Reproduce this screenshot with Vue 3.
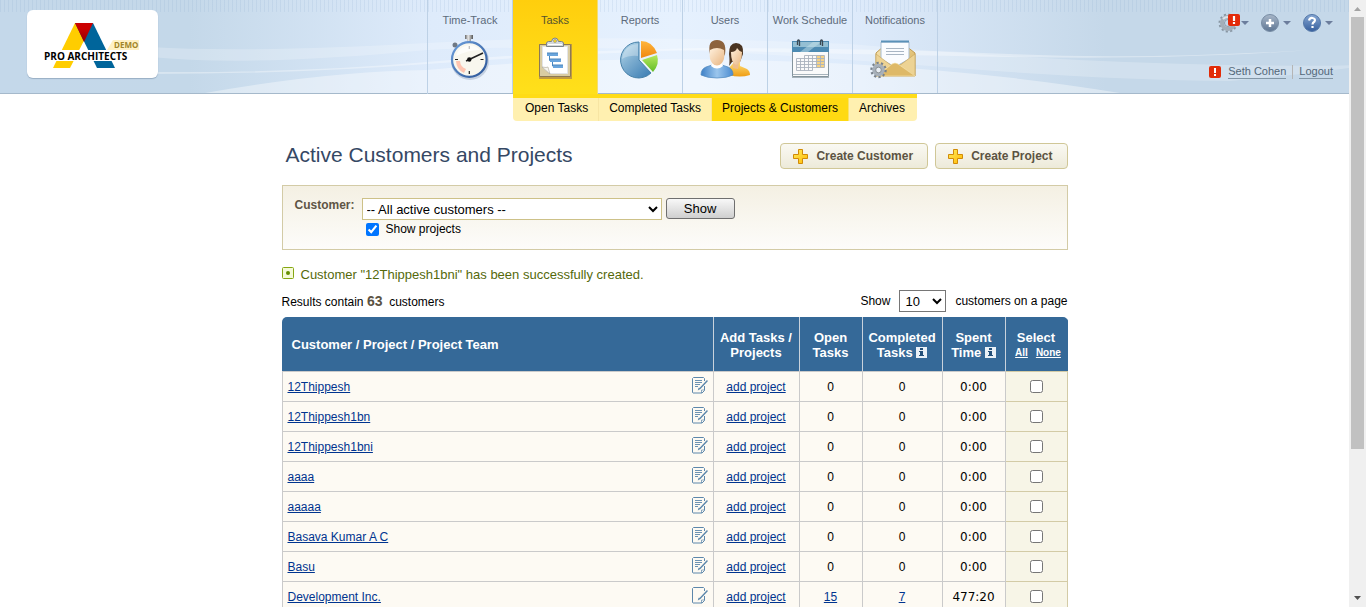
<script setup>
import { ref } from 'vue'

const navItems = [
  { label: 'Time-Track', icon: 'watch' },
  { label: 'Tasks', icon: 'tasks', active: true },
  { label: 'Reports', icon: 'pie' },
  { label: 'Users', icon: 'users' },
  { label: 'Work Schedule', icon: 'calendar' },
  { label: 'Notifications', icon: 'mail' },
]

const subItems = [
  { label: 'Open Tasks' },
  { label: 'Completed Tasks' },
  { label: 'Projects & Customers', active: true },
  { label: 'Archives' },
]

const customers = ref([
  { name: '12Thippesh', note: true, open: 0, done: 0, spent: '0:00', picked: false },
  { name: '12Thippesh1bn', note: true, open: 0, done: 0, spent: '0:00', picked: false },
  { name: '12Thippesh1bni', note: true, open: 0, done: 0, spent: '0:00', picked: false },
  { name: 'aaaa', note: true, open: 0, done: 0, spent: '0:00', picked: false },
  { name: 'aaaaa', note: true, open: 0, done: 0, spent: '0:00', picked: false },
  { name: 'Basava Kumar A C', note: true, open: 0, done: 0, spent: '0:00', picked: false },
  { name: 'Basu', note: true, open: 0, done: 0, spent: '0:00', picked: false },
  { name: 'Development Inc.', note: false, open: 15, done: 7, spent: '477:20', picked: false },
])

const showProjects = ref(true)
const pageSize = ref('10')

function pickAll(value) {
  customers.value.forEach((c) => { c.picked = value })
}
</script>

<template>
  <div class="screen">
    <div class="page">
      <header class="header">
        <svg class="waves" viewBox="0 0 1349 93" preserveAspectRatio="none" aria-hidden="true">
          <path d="M150 47Q250 53 427 43T850 44Q1050 62 1230 65T1349 60V68Q1290 76 1230 81Q1100 80 930 66T640 49Q520 46 427 50Q250 67 150 57Z" fill="#fff" opacity=".22" />
          <path d="M150 72Q300 73 427 62T700 48Q880 48 1010 54T1310 50Q1180 60 1010 57T700 50Q560 54 427 64T150 74Z" fill="#fff" opacity=".35" />
          <path d="M205 93Q330 71 427 70Q620 52 850 64Q1000 73 1120 93Z" fill="#fff" opacity=".38" />
        </svg>
        <div class="stripes"></div>

        <div class="brand">
          <a class="logo" href="#" aria-label="Pro Architects demo">
            <svg width="131" height="68" viewBox="27 10 131 68" aria-hidden="true">
              <defs>
                <linearGradient id="red" x1="0" y1="0" x2="0" y2="1">
                  <stop offset=".3" stop-color="#cb0000" />
                  <stop offset="1" stop-color="#8e0008" />
                </linearGradient>
              </defs>
              <path d="M75 23h18L70 68H53z" fill="#ffcd00" />
              <path d="M93 23l22 45H97L75 23z" fill="#00659b" />
              <path d="M75 23h18L84 42z" fill="url(#red)" />
              <path d="M46 50h80v11H46z" fill="#fff" />
              <path d="M113 40h26v10h-32z" fill="#fff1c4" />
              <text x="114" y="48" class="demo-text">DEMO</text>
              <text x="44" y="60" class="logo-text">PRO ARCHITECTS</text>
            </svg>
          </a>
        </div>

        <nav class="nav">
          <a v-for="item in navItems" :key="item.label" href="#" class="nav-item" :class="{ active: item.active }">
            <span class="nav-label">{{ item.label }}</span>
            <svg v-if="item.icon === 'watch'" width="50" height="50" viewBox="0 0 50 50" aria-hidden="true">
              <defs>
                <linearGradient id="silver" x1="0" x2="1"><stop offset="0" stop-color="#666" /><stop offset=".4" stop-color="#e8e8e8" /><stop offset="1" stop-color="#555" /></linearGradient>
                <linearGradient id="rim" x1="0" x2="1" y2="1"><stop offset="0" stop-color="#6c9edb" /><stop offset="1" stop-color="#2b5597" /></linearGradient>
              </defs>
              <circle cx="25" cy="28" r="19" fill="#9fb0c5" opacity=".5" />
              <path d="M20 2h8v4h-2v3h-4V6h-2z" fill="url(#silver)" />
              <circle cx="10" cy="12" r="2.500" fill="#707984" /><path d="M11 13l4 4" stroke="#777" stroke-width="2" />
              <circle cx="24.300" cy="26.500" r="17.300" fill="#f8f7ee" stroke="url(#rim)" stroke-width="2.200" />
              <path d="M11 28a14 14 0 0 0 8 12l2-4a9 9 0 0 1-6-8z" fill="#ffb6a0" opacity=".8" />
              <path d="M24.300 13v3M24.300 38v3M10 26.500h3M35.500 26.500h3" stroke="#222" stroke-width="1.200" />
              <path d="M21 28l17-8" stroke="#222" stroke-width="1.500" /><circle cx="24.300" cy="26.500" r="2.200" fill="#111" />
              <path d="M11 23A14 14 0 0 1 35 17Q23 17 11 23z" fill="#fff" opacity=".7" />
            </svg>
            <svg v-else-if="item.icon === 'tasks'" width="50" height="50" viewBox="0 0 50 50" aria-hidden="true">
              <path d="M9 11h33v35H9z" fill="#c09b40" />
              <path d="M9.500 11.500h31v32h-31z" fill="#d9cca2" stroke="#8d7954" />
              <path d="M12.500 13.500h25v27H20l-7.500-6z" fill="#fff" stroke="#e3e4e6" />
              <path d="M12 34q5 1 6 0 1 4 2 7z" fill="#f6f4ee" stroke="#aaa494" stroke-width=".6" />
              <path d="M16.500 13.500V10q0-1 2-1.500h3Q22 5 25 5t3.500 3.500h3q2 .500 2 1.500v3.500z" fill="#d4d9dc" stroke="#7c8388" /><circle cx="25" cy="8" r="1.500" fill="#ffdc16" stroke="#888" stroke-width=".6" />
              <path d="M18 11.500h14" stroke="#fff" />
              <path d="M19.500 22v5.500h3V33h3" fill="none" stroke="#4886bf" />
              <path d="M17 20h11v3H17zM20 26h11v3H20zM23 32h10v3H23z" fill="#6aa5dc" />
              <path d="M17 20h11M20 26h11M23 32h10" stroke="#4d87bd" />
            </svg>
            <svg v-else-if="item.icon === 'pie'" width="50" height="50" viewBox="0 0 50 50" aria-hidden="true">
              <defs>
                <linearGradient id="blue" x1="0" y1="0" x2=".8" y2="1"><stop offset="0" stop-color="#bfe0f0" /><stop offset=".45" stop-color="#82b1d2" /><stop offset="1" stop-color="#4383b7" /></linearGradient>
                <linearGradient id="orange" x1="0" x2="0" y2="1"><stop offset="0" stop-color="#ffb63c" /><stop offset="1" stop-color="#ef8710" /></linearGradient>
                <linearGradient id="green" x1="0" x2="0" y2="1"><stop offset="0" stop-color="#b6e85c" /><stop offset="1" stop-color="#63bd28" /></linearGradient>
              </defs>
              <path d="M24 27V9a18 18 0 1 0 12 31z" fill="url(#blue)" stroke="#4781a9" />
              <path d="M7 26Q9 12 23 11v12Q14 22 7 26z" fill="#fff" opacity=".3" />
              <path d="M26 25V8q11 0 16 12z" fill="url(#orange)" />
              <path d="M27 27l15-5q3 9-4 17z" fill="url(#green)" />
            </svg>
            <svg v-else-if="item.icon === 'users'" width="50" height="50" viewBox="0 0 50 50" aria-hidden="true">
              <defs>
                <linearGradient id="shirt" x1="0" x2="1"><stop offset="0" stop-color="#3e80c6" /><stop offset=".5" stop-color="#9bc6ed" /><stop offset="1" stop-color="#4b8bd0" /></linearGradient>
                <linearGradient id="skin" x1="0" x2="1" y2="1"><stop offset="0" stop-color="#fff0dc" /><stop offset="1" stop-color="#e8b581" /></linearGradient>
                <linearGradient id="gold" x1="0" x2="0" y2="1"><stop offset="0" stop-color="#ffe079" /><stop offset="1" stop-color="#ef9d15" /></linearGradient>
              </defs>
              <path d="M29 33q1-4 0-12 0-11 7-11 8 0 7 11l-3 8h-8z" fill="#4b3421" />
              <path d="M34 29h6v4l7 3q3 2 3 6-10 3-21 0V35z" fill="url(#gold)" />
              <path d="M33 29h6l-1 7-5-1z" fill="#eebd8c" />
              <path d="M31 19q5 0 6-4 2 3 5 4 0 12-6 13-5-2-5-13" fill="url(#skin)" />
              <path d="M10 21Q7 7 17 7t8 14l-3 6H12z" fill="#8d633d" />
              <path d="M12 29h10v5H12z" fill="#eec294" />
              <path d="M10 17q7-4 14 0 2 14-7 15-9-1-7-15" fill="url(#skin)" />
              <path d="M1 42q0-6 5-8l6-2q5 5 10 0l6 2q5 2 5 8-6 3-16 3T1 42" fill="url(#shirt)" stroke="#4c87bd" stroke-width=".7" />
              <path d="M12 30q5 5 10 0l1 3q-6 5-12 0z" fill="#fff" />
            </svg>
            <svg v-else-if="item.icon === 'calendar'" width="50" height="50" viewBox="0 0 50 50" aria-hidden="true">
              <path d="M7.500 9.500h36v34h-36z" fill="#fafafa" stroke="#84949d" />
              <path d="M7 8h37v11H7z" fill="#4d8bb2" /><path d="M8 9h35v5H8z" fill="#94bfd3" /><path d="M15 19L28 9h8L23 19z" fill="#c4e2e9" opacity=".5" />
              <path d="M12.500 12V8q1-2 2 0v5M35.500 12V8q1-2 2 0v5" fill="none" stroke="#3c4a54" stroke-width="1.300" />
              <path d="M32 22h7v13h-7z" fill="#f6d284" />
              <path d="M19.500 22.500h20v12h-4M11.500 25.500h28M11.500 28.500h28M11.500 31.500h28M11.500 34.500h24M11.500 37.500h16M11.500 25.500v12M15.500 25.500v12M19.500 22.500v15M23.500 22.500v15M27.500 22.500v15M31.500 22.500v12M35.500 22.500v12" fill="none" stroke="#aab2bd" stroke-width=".9" />
              <path d="M8 41.500h35M7 44.500h37" stroke="#a7b3bb" />
            </svg>
            <svg v-else width="50" height="50" viewBox="0 0 50 50" aria-hidden="true">
              <defs>
                <linearGradient id="env" x1="0" x2="1" y2="1"><stop offset="0" stop-color="#f8e6b3" /><stop offset="1" stop-color="#d3a94f" /></linearGradient>
              </defs>
              <path d="M6 20l8-7h22l9 7v23H6z" fill="url(#env)" stroke="#c09a4e" />
              <path d="M11 9h28v17L25 34 11 26z" fill="#fafcff" stroke="#a8bcd0" />
              <path d="M11 8.500h28" stroke="#5a91b8" stroke-width="2" /><path d="M16 15.500h18M16 18.500h18M16 21.500h18" stroke="#a9b6c4" />
              <path d="M6 21l16 12L6 43zM45 21L29 33l16 10z" fill="#edd394" stroke="#c8a55b" stroke-width=".6" />
              <path d="M7 43l15-12q3-2 6 0l17 12z" fill="#deb968" stroke="#f8e7b5" stroke-width=".6" />
              <circle cx="8.500" cy="37" r="7" fill="none" stroke="#77818c" stroke-width="2.500" stroke-dasharray="2.200 2.198" />
              <circle cx="8.500" cy="37" r="4.500" fill="none" stroke="#a7b0ba" stroke-width="3.500" /><circle cx="8.500" cy="37" r="2.800" fill="#e9eef4" stroke="#747e88" stroke-width=".8" />
            </svg>
          </a>
        </nav>

        <div class="account">
          <div class="tools">
            <button type="button" class="tool" aria-label="Settings">
              <svg width="31" height="22" viewBox="0 0 31 22" aria-hidden="true">
                <circle cx="10" cy="12" r="8.500" fill="none" stroke="#8896a3" stroke-width="2" stroke-dasharray="2.200 2.251" />
                <circle cx="10" cy="12" r="6" fill="none" stroke="#a3aeb9" stroke-width="4" /><path d="M5 8a6 6 0 0 1 9 0" fill="none" stroke="#dbe1e7" stroke-width="2" /><circle cx="10" cy="12" r="3.500" fill="#c5d8ea" stroke="#7d8b99" stroke-width=".8" />
                <rect x="10" y="3" width="12" height="12" rx="2" fill="#e32b0b" /><path d="M16 5v5M16 11v2" stroke="#fff" stroke-width="2.200" />
                <path d="M23 10h8l-4 4z" fill="#6c7d9c" />
              </svg>
            </button>
            <button type="button" class="tool" aria-label="Add">
              <svg width="31" height="22" viewBox="0 0 31 22" aria-hidden="true">
                <defs><linearGradient id="ball" x1="0" x2="0" y2="1"><stop offset="0" stop-color="#a8b7c9" /><stop offset="1" stop-color="#5e7693" /></linearGradient></defs>
                <circle cx="10" cy="12" r="8.500" fill="url(#ball)" stroke="#788da5" /><path d="M10 8v8M6 12h8" stroke="#fff" stroke-width="2.500" />
                <path d="M23 10h8l-4 4z" fill="#6c7d9c" />
              </svg>
            </button>
            <button type="button" class="tool" aria-label="Help">
              <svg width="31" height="22" viewBox="0 0 31 22" aria-hidden="true">
                <defs><linearGradient id="ball2" x1="0" x2="0" y2="1"><stop offset="0" stop-color="#86a7d3" /><stop offset="1" stop-color="#365f9d" /></linearGradient></defs>
                <circle cx="10" cy="12" r="8.500" fill="url(#ball2)" stroke="#5478a9" />
                <path d="M7 9.500q.500-3 3.500-2.500 3.500.800 2 3.500-2 1.200-2 3M10.500 15v2" fill="none" stroke="#fff" stroke-width="2.200" />
                <path d="M23 10h8l-4 4z" fill="#6c7d9c" />
              </svg>
            </button>
          </div>
          <div class="user">
            <svg width="12" height="12" viewBox="0 0 12 12" aria-hidden="true"><rect width="12" height="12" rx="2" fill="#e22b08" /><path d="M6 2v5M6 8v2" stroke="#fff" stroke-width="2" /></svg>
            <a href="#" class="user-link">Seth Cohen</a>
            <span class="divider"></span>
            <a href="#" class="user-link">Logout</a>
          </div>
        </div>
      </header>

      <nav class="subnav">
        <div class="subnav-bar">
          <a v-for="item in subItems" :key="item.label" href="#" class="sub-item" :class="{ active: item.active }">{{ item.label }}</a>
        </div>
      </nav>

      <main class="content">
        <div class="title-row">
          <h1>Active Customers and Projects</h1>
          <div class="actions">
            <button v-for="label in ['Create Customer', 'Create Project']" :key="label" type="button" class="create">
              <svg width="15" height="15" viewBox="0 0 15 15" aria-hidden="true">
                <defs><linearGradient id="plus" x1="0" x2="1" y2="1"><stop offset="0" stop-color="#ffed61" /><stop offset="1" stop-color="#ffb900" /></linearGradient></defs>
                <path d="M5.500.500h4v5h5v4h-5v5h-4v-5h-5v-4h5z" fill="url(#plus)" stroke="#d18b08" />
              </svg>
              {{ label }}
            </button>
          </div>
        </div>

        <form class="filter" @submit.prevent>
          <label class="filter-label" for="customer">Customer:</label>
          <div class="filter-fields">
            <div class="filter-line">
              <select id="customer" class="customer-select">
                <option>-- All active customers --</option>
              </select>
              <button type="submit" class="show">Show</button>
            </div>
            <label class="check-line"><input v-model="showProjects" type="checkbox" />Show projects</label>
          </div>
        </form>

        <p class="message">
          <svg width="12" height="12" viewBox="0 0 12 12" aria-hidden="true"><rect x=".5" y=".5" width="11" height="11" rx="1" fill="#f5fad9" stroke="#86a612" /><circle cx="6" cy="6" r="2" fill="#648d00" /></svg>
          Customer "12Thippesh1bni" has been successfully created.
        </p>

        <div class="summary">
          <div class="results">Results contain <strong>63</strong>&nbsp; customers</div>
          <div class="paging">
            <label for="size">Show</label>
            <select id="size" v-model="pageSize" class="size-select"><option>10</option><option>20</option><option>50</option></select>
            <span>customers on a page</span>
          </div>
        </div>

        <table class="grid">
          <colgroup>
            <col /><col class="w-add" /><col class="w-open" /><col class="w-done" /><col class="w-spent" /><col class="w-select" />
          </colgroup>
          <thead>
            <tr>
              <th class="first">Customer / Project / Project Team</th>
              <th>Add Tasks /<br />Projects</th>
              <th>Open<br />Tasks</th>
              <th>Completed<br />Tasks <svg class="info" width="11" height="11" viewBox="0 0 11 11" aria-hidden="true"><path d="M0 0h11v11H0z" fill="#eaf1f7" /><path d="M4 1h3v2H4zM3 4h4v4h1v1H3V8h1V5H3z" fill="#234f79" /></svg></th>
              <th>Spent<br />Time <svg class="info" width="11" height="11" viewBox="0 0 11 11" aria-hidden="true"><path d="M0 0h11v11H0z" fill="#eaf1f7" /><path d="M4 1h3v2H4zM3 4h4v4h1v1H3V8h1V5H3z" fill="#234f79" /></svg></th>
              <th>
                Select
                <div class="select-links"><a href="#" @click.prevent="pickAll(true)">All</a><a href="#" @click.prevent="pickAll(false)">None</a></div>
              </th>
            </tr>
          </thead>
          <tbody>
            <tr v-for="c in customers" :key="c.name">
              <td class="name">
                <div class="name-line">
                  <a href="#">{{ c.name }}</a>
                  <svg width="16" height="17" viewBox="0 0 16 17" fill="none" stroke="#5c87ab" aria-hidden="true">
                    <path d="M12.500 4V1.500l-1-1h-10l-1 1v14l.500.500h9l2.500-2.500V9" />
                    <path d="M9.500 16v-3h3" stroke-width=".7" />
                    <path v-if="c.note" d="M3 3.500h7M3 5.500h7M3 7.500h5M3 9.500h3" stroke-width=".9" />
                    <path d="M15.500 3.500L8 11.500l-1 .500.300-1" stroke-width="1.500" />
                  </svg>
                </div>
              </td>
              <td><a href="#">add project</a></td>
              <td><a v-if="c.open" href="#">{{ c.open }}</a><template v-else>0</template></td>
              <td><a v-if="c.done" href="#">{{ c.done }}</a><template v-else>0</template></td>
              <td class="spent">{{ c.spent }}</td>
              <td class="pick"><input v-model="c.picked" type="checkbox" :aria-label="'Select ' + c.name" /></td>
            </tr>
          </tbody>
        </table>
      </main>
    </div>

    <div class="scrollbar" aria-hidden="true">
      <svg width="17" height="17" viewBox="0 0 17 17"><path d="M5 11l3.500-4 3.500 4z" fill="#a3a3a3" /></svg>
      <div class="track"><div class="thumb"></div></div>
      <svg width="17" height="17" viewBox="0 0 17 17"><path d="M5 6l3.500 4L12 6z" fill="#505050" /></svg>
    </div>
  </div>
</template>

<style>
body { background: #fff; }
</style>

<style scoped>
.screen {
  display: flex;
  height: 100vh;
  overflow: hidden;
  font: 12px/15px "Liberation Sans", Arial, sans-serif;
  color: #000;
  --nav-left: 427px;
  --nav-cell: 85px;
}
.page { flex: 1; min-width: 0; overflow: hidden; }
.header {
  position: relative;
  display: flex;
  height: 94px;
  box-sizing: border-box;
  background: linear-gradient(90deg, #c4d8ea 0, #c4d8e9 14%, #deebfb 32%, #e6f1fe 50%, #deebfb 63%, #c5d8e9 82%, #c5d8e9 100%);
  box-shadow: inset 0 -1px #a5b9cb;
}
.waves { position: absolute; left: 0; top: 0; width: 100%; height: 93px; }
.stripes {
  position: absolute; left: 0; right: 0; top: 0; height: 12px;
  background: repeating-linear-gradient(90deg, rgba(125, 160, 200, .14) 0 1px, transparent 1px 4px);
}
.brand { position: relative; flex: 0 0 var(--nav-left); box-sizing: border-box; padding: 10px 27px; }
.logo { display: block; width: 131px; height: 68px; background: #fff; border-radius: 6px; box-shadow: 0 1px 1px #98aec4; }
.logo svg { display: block; }
.logo-text { font: bold 10px "Open Sans", "Noto Sans", sans-serif; fill: #000; }
.demo-text { font: bold 8px "Open Sans", "Noto Sans", sans-serif; fill: #a18528; }
.nav { position: relative; display: flex; border-left: 1px solid #bdd1e6; }
.nav-item {
  display: flex; flex-direction: column; align-items: center;
  width: var(--nav-cell); height: 93px; box-sizing: border-box;
  padding-top: 13px; gap: 5px;
  border-right: 1px solid #bdd1e6;
  color: #5d6b7b; text-decoration: none; font-size: 11px;
}
.nav-item.active { height: 94px; background: linear-gradient(#ffce0d, #ffe01b); border-color: #f2dd75; color: #55532d; }
.account { position: relative; flex: 1; display: flex; flex-direction: column; align-items: flex-end; padding: 11px 16px 0 0; }
.tools { display: flex; gap: 11px; }
.tool { padding: 0; border: 0; background: none; height: 22px; }
.tool svg { display: block; }
.user { display: flex; align-items: center; margin-top: 32px; color: #5d6b7b; font-size: 11px; line-height: 13px; }
.user-link { color: #536779; text-decoration: none; border-bottom: 1px solid #8296a6; }
.user svg { margin-right: 7px; }
.divider { width: 1px; height: 14px; margin: 0 6px; background: #b5b5b5; }
.subnav { display: flex; padding-left: calc(var(--nav-left) + var(--nav-cell) + 1px); }
.subnav-bar { display: flex; border-top: 4px solid #ffdc17; border-radius: 0 0 4px 4px; overflow: hidden; }
.sub-item { padding: 3px 10px 5px 12px; background: #fff0b0; color: #000; text-decoration: none; border-right: 1px solid #f7e5a3; }
.sub-item:nth-child(2) { padding-left: 10px; }
.sub-item.active { padding-left: 10px; background: #ffda12; border-color: #fbe36a; }
.sub-item:last-child { padding: 3px 12px 5px 10px; border: 0; }

.content { width: 786px; margin: 0 auto; padding-top: 22px; }
.title-row { display: flex; justify-content: space-between; height: 26px; align-items: center; }
h1 { margin: 0 0 2px 4px; font-weight: normal; font-size: 21px; line-height: 24px; color: #354864; }
.actions { display: flex; gap: 7px; }
.create {
  display: flex; align-items: center; gap: 8px; height: 26px; padding: 0 14px 0 12px;
  border: 1px solid #d0c797; border-radius: 4px;
  background: linear-gradient(#faf9f3, #edead9);
  font: bold 12px "Liberation Sans", Arial, sans-serif; color: #5c5343;
}
.filter {
  display: flex; gap: 7px; height: 65px; margin-top: 16px; padding: 12px 11px 0 12px; box-sizing: border-box;
  border: 1px solid #d3cba6; background: linear-gradient(#f4f0e3, #fdfcfa);
}
.filter-label { font-weight: bold; color: #5e5545; }
.filter-line { display: flex; gap: 4px; }
.customer-select { width: 300px; height: 22px; box-sizing: border-box; border: 1px solid #cdc188; background: #fff; font: 13px "Liberation Sans", Arial, sans-serif; color: #000; padding: 0; }
.show { width: 69px; height: 21px; padding: 0; border: 1px solid #6f6f6f; border-radius: 3px; background: linear-gradient(#f8f8f8, #cfcfcf); font: 13px "Liberation Sans", Arial, sans-serif; color: #000; }
input[type="checkbox"] { width: 13px; height: 13px; margin: 0; }
.check-line { display: flex; align-items: center; gap: 7px; padding: 2px 4px; }
.message { display: flex; gap: 7px; margin: 17px 0 0; color: #55690b; font-size: 13px; line-height: 15px; }
.summary { display: flex; justify-content: space-between; align-items: center; height: 22px; margin-top: 8px; }
.results { padding-top: 2px; }
.results strong { font-size: 14px; color: #5c5343; }
.paging { display: flex; align-items: center; gap: 9px; }
.size-select { width: 47px; height: 22px; border: 1px solid #767676; background: #fff; color: #000; font: 13px "Liberation Sans", Arial, sans-serif; padding: 0 0 0 1px; }
.grid { width: 100%; margin-top: 5px; table-layout: fixed; border-collapse: separate; border-spacing: 0; border-radius: 5px 5px 0 0; overflow: hidden; }
.w-add { width: 86px; }
.w-open { width: 63px; }
.w-done { width: 80px; }
.w-spent { width: 63px; }
.w-select { width: 62px; }
th { height: 54px; padding: 2px 0 0; box-sizing: border-box; background: #356998; color: #fff; font-size: 13px; line-height: 15px; border-right: 1px solid #c8d2dc; }
th:last-child { border-right-color: #356998; }
th.first { text-align: left; padding: 0 0 0 10px; }
.info { vertical-align: -1px; }
.select-links { display: flex; justify-content: center; gap: 8px; padding: 1px 0 0 4px; font-size: 10px; line-height: 14px; }
.select-links a { color: #fff; }
td { height: 30px; padding: 1px 0 0; box-sizing: border-box; text-align: center; background: #fdfaf3; border-right: 1px solid #cacaca; border-top: 1px solid #cacaca; }
td a { color: #00348f; }
.name { padding: 1px 5px 0; border-left: 1px solid #cacaca; }
.name-line { display: flex; justify-content: space-between; align-items: center; }
.name-line svg { margin: -3px 0 0; }
.spent { font-family: "DejaVu Sans", Verdana, sans-serif; }
.pick { padding: 0; background: #f7f5e7; border-color: #d3cba6; line-height: 13px; }
.pick input { vertical-align: middle; }

.scrollbar { display: flex; flex-direction: column; width: 17px; background: #f0f0f0; }
.scrollbar svg { display: block; }
.track { flex: 1; padding: 0 2px; }
.thumb { height: 432px; background: #c1c1c1; }
</style>
